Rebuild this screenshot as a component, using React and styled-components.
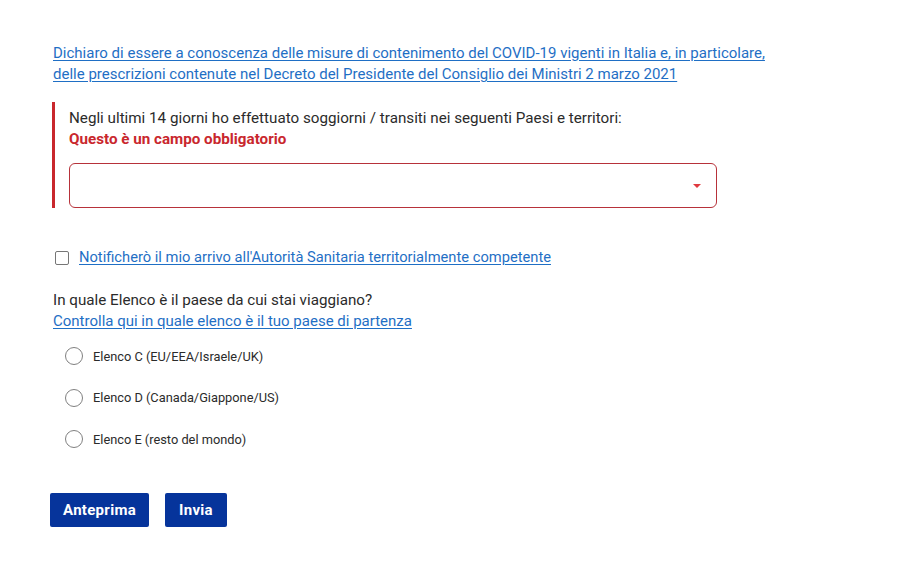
import React from "react"
import styled, { createGlobalStyle } from "styled-components"

const GlobalStyle = createGlobalStyle`
  html, body {
    margin: 0;
    background: #fff;
  }
  body {
    font-family: Roboto, "Liberation Sans", sans-serif;
    color: #2b2b2b;
  }
`

const Page = styled.div`
  width: 914px;
  height: 568px;
  box-sizing: border-box;
  padding: 43px 0 0 53px;
  display: flex;
  flex-direction: column;
  align-items: flex-start;
`
const Link = styled.a`
  font-size: ${(p) => p.$size || 15}px;
  line-height: 21px;
  color: #1f6fc5;
  text-decoration: underline;
  text-underline-offset: 2px;
  cursor: pointer;
`
const Declaration = styled(Link)`
  display: block;
`
const Fieldset = styled.div`
  margin: 17px 0 0 -1px;
  padding: 6px 0 0 14px;
  border-left: 3px solid #c9272d;
  display: flex;
  flex-direction: column;
`
const Label = styled.div`
  font-size: 15.2px;
  line-height: 21px;
  color: #2b2b2b;
`
const ErrorText = styled.div`
  font-size: 15.2px;
  line-height: 21px;
  font-weight: 700;
  color: #c9272d;
`
const Select = styled.div`
  margin-top: 13px;
  width: 648px;
  height: 45px;
  box-sizing: border-box;
  border: 1px solid #b7323a;
  border-radius: 6px;
  display: flex;
  align-items: center;
  justify-content: flex-end;
  padding-right: 15px;
`
const Caret = styled.span`
  width: 0;
  height: 0;
  border-left: 4px solid transparent;
  border-right: 4px solid transparent;
  border-top: 4px solid #e0393f;
  margin-top: 1px;
`
const CheckRow = styled.label`
  margin: 39px 0 0 2px;
  display: flex;
  align-items: center;
  gap: 10px;
`
const Checkbox = styled.span`
  width: 14px;
  height: 14px;
  box-sizing: border-box;
  border: 1.5px solid #767676;
  border-radius: 2px;
`
const Question = styled(Label)`
  margin-top: 22px;
`
const RadioGroup = styled.div`
  margin: 14px 0 0 12px;
  display: flex;
  flex-direction: column;
  gap: 21.5px;
`
const RadioRow = styled.label`
  display: flex;
  align-items: center;
  gap: 10px;
  height: 20px;
`
const Radio = styled.span`
  width: 18px;
  height: 18px;
  box-sizing: border-box;
  border: 1.3px solid #808080;
  border-radius: 50%;
`
const RadioText = styled.span`
  font-size: 12.8px;
  color: #2b2b2b;
`
const Actions = styled.div`
  margin: 44px 0 0 -3px;
  display: flex;
  gap: 16px;
`
const Button = styled.button`
  height: 34px;
  padding: 0 ${(p) => p.$pad}px;
  border: none;
  border-radius: 2px;
  background: #06349b;
  color: #fff;
  font-family: Roboto, "Liberation Sans", sans-serif;
  font-size: 15px;
  font-weight: 700;
  letter-spacing: 0.3px;
  cursor: pointer;
`

const options = [
  "Elenco C (EU/EEA/Israele/UK)",
  "Elenco D (Canada/Giappone/US)",
  "Elenco E (resto del mondo)",
]

export default function App() {
  return (
    <>
      <GlobalStyle />
      <Page>
        <Declaration>
          Dichiaro di essere a conoscenza delle misure di contenimento del COVID-19 vigenti in Italia e, in particolare,
          <br />
          delle prescrizioni contenute nel Decreto del Presidente del Consiglio dei Ministri 2 marzo 2021
        </Declaration>
        <Fieldset>
          <Label>Negli ultimi 14 giorni ho effettuato soggiorni / transiti nei seguenti Paesi e territori:</Label>
          <ErrorText>Questo è un campo obbligatorio</ErrorText>
          <Select>
            <Caret />
          </Select>
        </Fieldset>
        <CheckRow>
          <Checkbox />
          <Link $size={14.7}>Notificherò il mio arrivo all'Autorità Sanitaria territorialmente competente</Link>
        </CheckRow>
        <Question>In quale Elenco è il paese da cui stai viaggiano?</Question>
        <Link>Controlla qui in quale elenco è il tuo paese di partenza</Link>
        <RadioGroup>
          {options.map((o) => (
            <RadioRow key={o}>
              <Radio />
              <RadioText>{o}</RadioText>
            </RadioRow>
          ))}
        </RadioGroup>
        <Actions>
          <Button $pad={13}>Anteprima</Button>
          <Button $pad={14}>Invia</Button>
        </Actions>
      </Page>
    </>
  )
}
